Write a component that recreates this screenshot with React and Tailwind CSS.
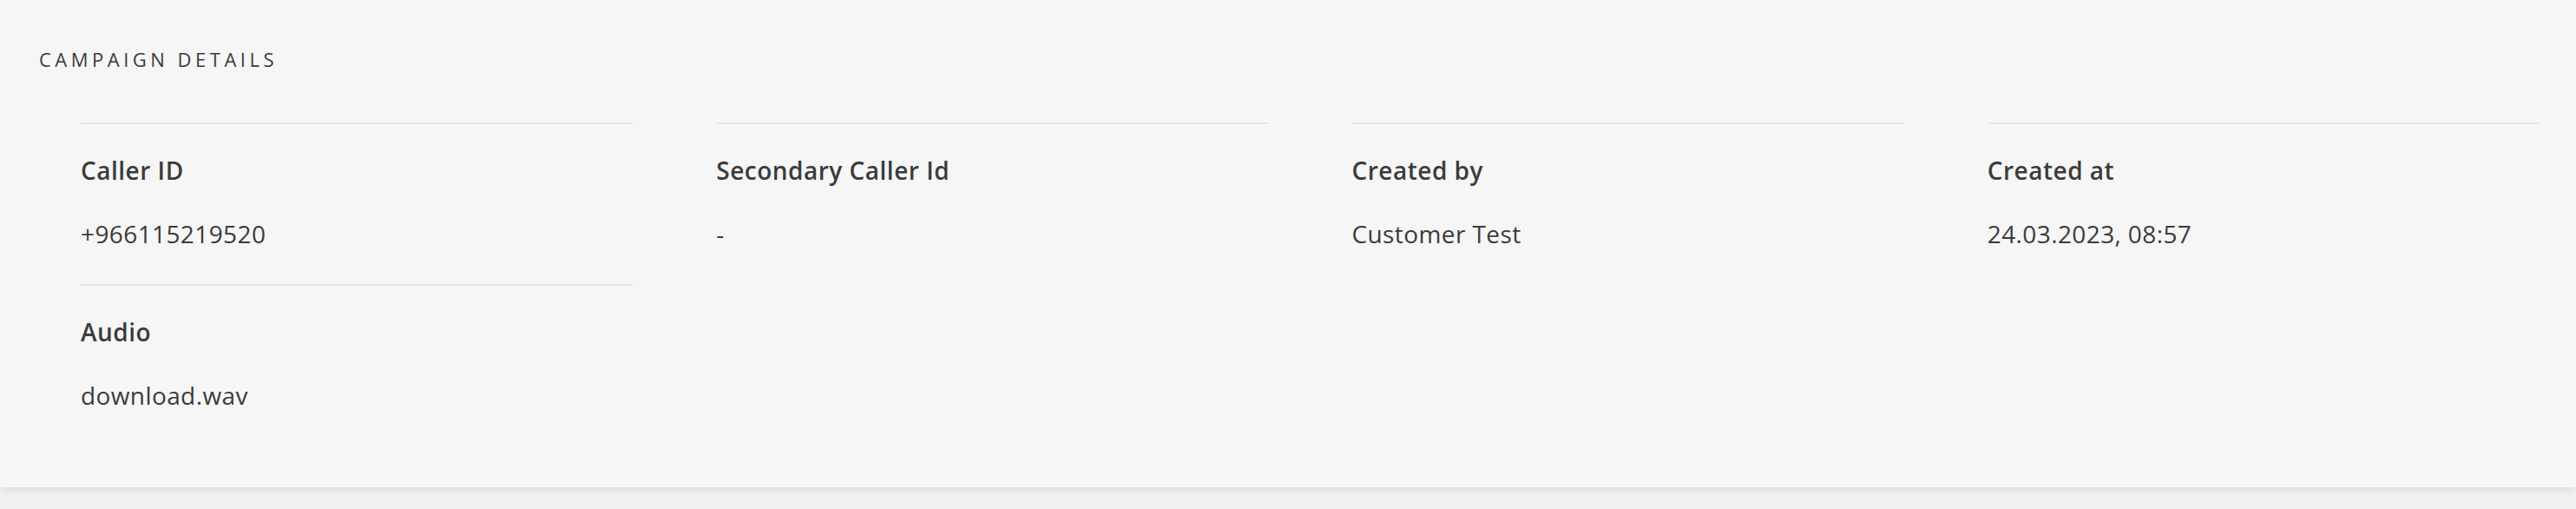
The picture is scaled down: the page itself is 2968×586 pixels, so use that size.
import React from "react";

const FIELDS = [
  { label: "Caller ID", value: "+966115219520" },
  { label: "Secondary Caller Id", value: "-" },
  { label: "Created by", value: "Customer Test" },
  { label: "Created at", value: "24.03.2023, 08:57" },
  { label: "Audio", value: "download.wav" },
];

function Field({ label, value }) {
  return (
    <div className="border-t-2 border-[#e5e5e5] pt-[36px] pb-[41px]">
      <div className="text-[28px] leading-[34px] font-semibold tracking-[0.5px] text-[#3b3b3b]">{label}</div>
      <div className="mt-[39px] text-[28px] leading-[34px] font-normal tracking-[0.4px] text-[#3b3b3b]">{value}</div>
    </div>
  );
}

export default function App() {
  return (
    <div className="h-[586px] bg-[#f1f1f1] font-['Open_Sans',sans-serif]">
      <section className="bg-[#f6f6f6] shadow-[0_3px_8px_rgba(0,0,0,0.09)] pt-[55px] pb-[48px] pl-[45px] pr-[42px]">
        <h2 className="text-[22px] leading-[26px] tracking-[4.5px] uppercase text-[#3b3b3b]">
          Campaign Details
        </h2>
        <div className="mt-[60px] ml-[48px] grid grid-cols-4 gap-x-[96px]">
          {FIELDS.map((f) => (
            <Field key={f.label} label={f.label} value={f.value} />
          ))}
        </div>
      </section>
    </div>
  );
}
